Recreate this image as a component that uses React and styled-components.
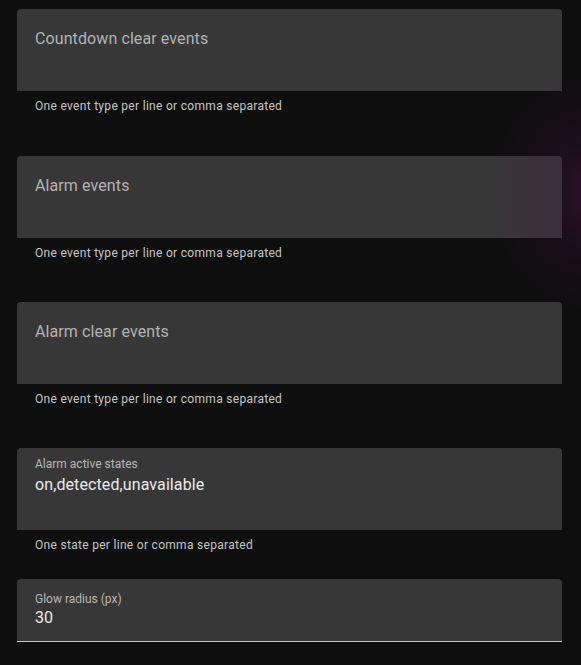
import React from 'react'
import styled, { createGlobalStyle } from 'styled-components'

const Global = createGlobalStyle`
  html, body {
    margin: 0;
    padding: 0;
    background: #0e0e0e;
    font-family: Roboto, "Liberation Sans", sans-serif;
  }
`;

const Page = styled.div`
  position: relative;
  width: 581px;
  height: 665px;
  overflow: hidden;
  padding: 9px 19px 0 17px;
  box-sizing: border-box;
  display: flex;
  flex-direction: column;
`;

const Glow = styled.div`
  position: absolute;
  left: 470px;
  top: 60px;
  width: 240px;
  height: 270px;
  pointer-events: none;
  background: radial-gradient(ellipse 100px 125px at 118px 132px,
    rgba(95, 20, 95, 0.36) 0%,
    rgba(75, 15, 75, 0.18) 45%,
    rgba(60, 10, 60, 0) 100%);
`;

const Block = styled.div`
  display: flex;
  flex-direction: column;
  margin-bottom: ${(p) => p.gap}px;
`;

const Field = styled.div`
  height: ${(p) => p.h}px;
  background: #373737;
  border-radius: 4px 4px 0 0;
  border-bottom: ${(p) => (p.line ? '1px solid #c4c4c4' : 'none')};
  padding: 0 18px;
  display: flex;
  flex-direction: column;
  box-sizing: content-box;
`;

const Placeholder = styled.div`
  font-size: 16px;
  color: #b3b3b3;
  margin-top: 20px;
  line-height: 20px;
  letter-spacing: 0.1px;
`;

const SmallLabel = styled.div`
  font-size: 12px;
  color: #b8b8b8;
  line-height: 14px;
  margin-top: ${(p) => p.top}px;
`;

const Value = styled.div`
  font-size: 16px;
  color: #ececec;
  line-height: 20px;
  letter-spacing: 0.1px;
  margin-top: ${(p) => p.top}px;
`;

const Helper = styled.div`
  font-size: 12px;
  color: #c6c6c6;
  line-height: 16px;
  letter-spacing: 0.3px;
  padding: 7px 18px 0;
`;

const events = [
  'Countdown clear events',
  'Alarm events',
  'Alarm clear events',
]

const App = () => {
  return (
    <Page>
      <Global />
      {events.map((t, i) => (
        <Block key={t} gap={i === 0 ? 42 : 41}>
          <Field h={82}>
            <Placeholder>{t}</Placeholder>
          </Field>
          <Helper>One event type per line or comma separated</Helper>
        </Block>
      ))}
      <Block gap={26}>
        <Field h={82}>
          <SmallLabel top={9}>Alarm active states</SmallLabel>
          <Value top={4}>on,detected,unavailable</Value>
        </Field>
        <Helper>One state per line or comma separated</Helper>
      </Block>
      <Block gap={0}>
        <Field h={62} line>
          <SmallLabel top={13}>Glow radius (px)</SmallLabel>
          <Value top={2}>30</Value>
        </Field>
      </Block>
      <Glow />
    </Page>
  )
}

export default App
